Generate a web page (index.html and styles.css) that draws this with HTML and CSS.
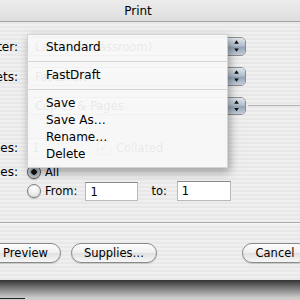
FILE: index.html
```html
<!DOCTYPE html>
<html lang="en">
<head>
    <meta charset="UTF-8" />
    <title>Print</title>
    <link rel="stylesheet" href="styles.css">
</head>
<body>
    <div class="window">
        <div class="titlebar">Print</div>

        <div class="content">
            <div class="row row-first">
                <span class="label">Printer:</span>
                <div class="popup">
                    <span class="popup-text">LaserJet (classroom)</span>
                    <span class="stepper">
                        <svg width="18" height="19" viewBox="0 0 18 19">
                            <polygon points="6.5,6.5 11.5,6.5 9,3" fill="#111" />
                            <polygon points="6.5,11.5 11.5,11.5 9,15" fill="#111" />
                        </svg>
                    </span>
                </div>
            </div>

            <div class="row">
                <span class="label">Presets:</span>
                <div class="popup">
                    <span class="popup-text">FastDraft</span>
                    <span class="stepper">
                        <svg width="18" height="19" viewBox="0 0 18 19">
                            <polygon points="6.5,6.5 11.5,6.5 9,3" fill="#111" />
                            <polygon points="6.5,11.5 11.5,11.5 9,15" fill="#111" />
                        </svg>
                    </span>
                </div>
            </div>

            <div class="row panel-row">
                <span class="label"></span>
                <div class="popup popup-small">
                    <span class="popup-text">Copies &amp; Pages</span>
                    <span class="stepper">
                        <svg width="18" height="18" viewBox="0 0 18 18">
                            <polygon points="6.5,6.5 11.5,6.5 9,3" fill="#111" />
                            <polygon points="6.5,11 11.5,11 9,14.5" fill="#111" />
                        </svg>
                    </span>
                </div>
                <div class="rule"></div>
            </div>

            <div class="row row-copies">
                <span class="label">Copies:</span>
                <span class="field field-copies">1</span>
                <span class="check-wrap">
                    <span class="checkbox">&#10003;</span>
                    <span>Collated</span>
                </span>
            </div>

            <div class="row row-pages">
                <span class="label">Pages:</span>
                <span class="radio radio-on"></span>
                <span class="radio-text">All</span>
            </div>

            <div class="row row-range">
                <span class="label"></span>
                <span class="radio"></span>
                <span class="radio-text">From:</span>
                <span class="field field-from">1</span>
                <span class="to-text">to:</span>
                <span class="field field-to">1</span>
            </div>

            <div class="divider"></div>

            <div class="buttons">
                <button class="btn btn-preview">Preview</button>
                <button class="btn btn-supplies">Supplies…</button>
                <button class="btn btn-cancel">Cancel</button>
                <button class="btn btn-print">Print</button>
            </div>
        </div>
    </div>

    <div class="backdrop"><span class="backdrop-line"></span></div>

    <!-- Presets menu, open over the dialog -->
    <div class="menu">
        <div class="menu-item">Standard</div>
        <div class="menu-sep"></div>
        <div class="menu-item">FastDraft</div>
        <div class="menu-sep"></div>
        <div class="menu-item">Save</div>
        <div class="menu-item">Save As…</div>
        <div class="menu-item">Rename…</div>
        <div class="menu-item">Delete</div>
    </div>
</body>
</html>
```

FILE: styles.css
```css
body {
    margin: 0;
    width: 300px;
    height: 300px;
    overflow: hidden;
    position: relative;
    font-family: "DejaVu Sans", sans-serif;
    font-size: 11.5px;
    color: #000;
    background: #c8c8c8;
}

.window {
    width: 420px;
    margin-left: -72px;
    background: repeating-linear-gradient(to bottom, #efefef 0, #efefef 2px, #e8e8e8 2px, #e8e8e8 4px);
}

.titlebar {
    height: 21px;
    line-height: 22px;
    text-align: center;
    font-size: 12px;
    background: linear-gradient(#ececec, #dedede);
    border-bottom: 1px solid #a4a4a4;
}

.content {
    padding: 0 0 17px 0;
}

.row {
    display: flex;
    align-items: center;
    gap: 9px;
    margin-top: 11px;
    height: 19px;
}

.row-first {
    margin-top: 15px;
}

.label {
    width: 90px;
    flex: none;
    text-align: right;
    font-size: 12px;
}

.popup {
    width: 217px;
    height: 17px;
    flex: none;
    display: flex;
    align-items: center;
    border: 1px solid #8d8d8d;
    border-radius: 5px;
    overflow: hidden;
    background: linear-gradient(#ffffff, #ececec 50%, #e2e2e2 51%, #f6f6f6);
}

.popup-text {
    flex: 1;
    padding-left: 7px;
    white-space: nowrap;
}

.stepper {
    width: 17px;
    height: 100%;
    display: flex;
    align-items: center;
    justify-content: center;
    border-left: 1px solid #7b8796;
    background: linear-gradient(#dfe5ec 0%, #b3bfcd 45%, #94a4b7 55%, #c3ceda 100%);
}

.panel-row {
    height: 18px;
    gap: 0;
}

.panel-row .label {
    margin-right: 9px;
}

.popup-small {
    height: 16px;
}

.rule {
    flex: 1;
    height: 1px;
    margin-left: 2px;
    margin-top: -2px;
    background: #b2b2b2;
}

.row-copies {
    margin-top: 23px;
}

.field {
    height: 17px;
    line-height: 18px;
    flex: none;
    padding-left: 4px;
    box-sizing: border-box;
    background: #fff;
    border: 1px solid #b9b9b9;
    border-top-color: #8a8a8a;
}

.field-copies {
    width: 45px;
    height: 19px;
}

.check-wrap {
    display: flex;
    align-items: center;
    gap: 5px;
    margin-left: 16px;
}

.checkbox {
    width: 12px;
    height: 12px;
    font-size: 10px;
    line-height: 12px;
    text-align: center;
    border: 1px solid #8a8a8a;
    border-radius: 2px;
    background: linear-gradient(#fafafa, #dcdcdc);
}

.row-pages {
    margin-top: 6px;
    height: 18px;
    gap: 0;
}

.row-range {
    margin-top: 0;
    height: 20px;
    gap: 0;
}

.row-pages .label,
.row-range .label {
    margin-right: 9px;
}

.radio {
    width: 12px;
    height: 12px;
    flex: none;
    border-radius: 50%;
    border: 1px solid #7d7d7d;
    background: radial-gradient(circle at 50% 30%, #ffffff, #e4e4e4 70%, #cfcfcf);
    box-shadow: 0 1px 1px rgba(0, 0, 0, 0.2);
}

.radio-on {
    border-color: #555;
    background: radial-gradient(circle, #111 0, #111 2.5px, #9aa3ad 3px, #cdd3da 6px);
}

.radio-text {
    margin-left: 4px;
}

.field-from {
    width: 53px;
    height: 19px;
    margin-left: 8px;
}

.to-text {
    margin-left: 13px;
}

.field-to {
    width: 54px;
    height: 20px;
    margin-left: 10px;
}

.divider {
    margin-top: 21px;
    height: 1px;
    background: #a9a9a9;
    border-bottom: 1px solid #f8f8f8;
}

.buttons {
    display: flex;
    margin-top: 19px;
    padding-left: 62px;
}

.btn {
    flex: none;
    height: 20px;
    padding: 0;
    font-family: inherit;
    font-size: 11.5px;
    color: #000;
    border: 1px solid #8a8a8a;
    border-radius: 10px;
    background: linear-gradient(#fdfdfd, #efefef 50%, #e0e0e0 51%, #f6f6f6);
    box-shadow: 0 1px 1px rgba(0, 0, 0, 0.15);
}

.btn-preview {
    width: 71px;
}

.btn-supplies {
    width: 86px;
    margin-left: 10px;
}

.btn-cancel {
    width: 66px;
    margin-left: 85px;
}

.btn-print {
    width: 66px;
    margin-left: 12px;
}

.backdrop {
    height: 20px;
    position: relative;
    background: linear-gradient(#333333, #7a7a7a 40%, #cdcdcd 90%);
}

.backdrop-line {
    position: absolute;
    left: 0;
    bottom: 1px;
    width: 25px;
    height: 1px;
    background: #222;
}

.menu {
    position: absolute;
    left: 27px;
    top: 34px;
    width: 199px;
    padding: 4px 0;
    background: rgba(248, 248, 248, 0.94);
    border: 1px solid rgba(0, 0, 0, 0.14);
    box-shadow: 2px 4px 9px rgba(0, 0, 0, 0.35);
}

.menu-item {
    height: 17px;
    line-height: 17px;
    padding-left: 18px;
    font-size: 12px;
}

.menu-sep {
    height: 1px;
    margin: 5px 0;
    background: #d6d6d6;
}
```
